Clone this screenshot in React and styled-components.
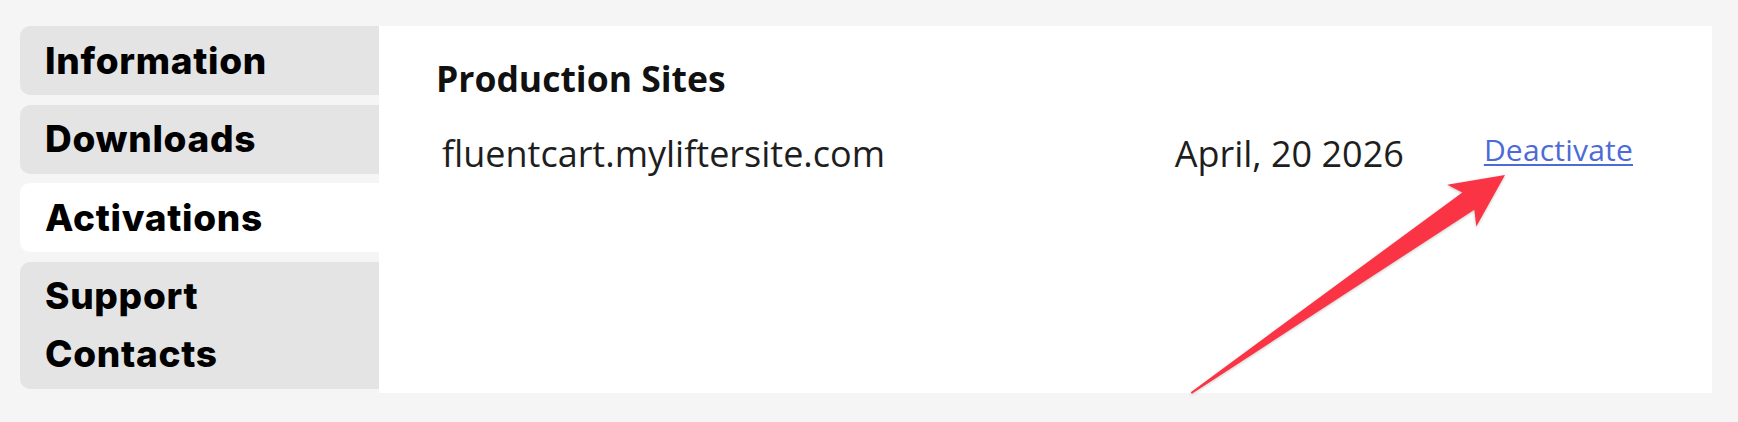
import React from 'react'
import styled, { createGlobalStyle } from 'styled-components'

const GlobalStyle = createGlobalStyle`
  html, body {
    margin: 0;
    padding: 0;
    background: #f5f5f5;
  }
  * {
    box-sizing: border-box;
  }
`

const Layout = styled.div`
  display: flex;
  min-height: 100vh;
  padding: 26px 26px 29px 20px;
`

const Sidebar = styled.nav`
  display: flex;
  flex-direction: column;
  gap: 9.5px;
  width: 359px;
  flex-shrink: 0;
`

const Tab = styled.a`
  display: block;
  padding: 5.5px 20px 5.5px 25px;
  border-radius: 10px 0 0 10px;
  background: ${props => (props.$active ? '#ffffff' : '#e4e4e4')};
  color: #000;
  font-family: Inter, 'Liberation Sans', sans-serif;
  font-weight: 800;
  font-size: 37px;
  letter-spacing: 0.7px;
  line-height: 58px;
  text-decoration: none;
  cursor: pointer;
`

const Panel = styled.section`
  position: relative;
  flex: 1;
  background: #fff;
  padding: 28px 79px 0 57px;
  font-family: 'Open Sans', 'Noto Sans', sans-serif;
`

const Heading = styled.h2`
  margin: 0 0 26.5px 0;
  font-size: 35.5px;
  font-weight: 700;
  line-height: normal;
  color: #111;
`

const SiteRow = styled.div`
  display: grid;
  grid-template-columns: 1fr auto auto;
  column-gap: 80px;
  align-items: start;
  padding-left: 6px;
`

const Cell = styled.span`
  font-size: 36px;
  line-height: normal;
  color: #1e1e1e;
`

const DeactivateLink = styled.a`
  font-size: 30px;
  letter-spacing: 0.2px;
  line-height: normal;
  color: #4c6bd6;
  text-decoration: underline;
  text-decoration-thickness: 2px;
  text-underline-offset: 3px;
  cursor: pointer;
`

const Pointer = styled.svg`
  position: absolute;
  left: 0;
  top: 0;
  width: 100%;
  height: 100%;
  pointer-events: none;
  overflow: visible;
  filter: drop-shadow(0 1px 1.5px rgba(0, 0, 0, 0.22));
`

const tabs = ['Information', 'Downloads', 'Activations', 'Support Contacts']

const sites = [
  { domain: 'fluentcart.myliftersite.com', date: 'April, 20 2026' }
]

// tapered callout arrow, tip at the origin, pointing along +x
const ArrowMark = ({ x, y, angle }) => (
  <g transform={`translate(${x} ${y}) rotate(${angle})`}>
    <polygon
      points="0,0 -53,26 -45,11 -382,1 -382,-1 -45,-10 -53,-25"
      fill="#fa3445"
    />
  </g>
)

export default function App () {
  return (
    <>
      <GlobalStyle />
      <Layout>
        <Sidebar>
          {tabs.map(label => (
            <Tab key={label} $active={label === 'Activations'}>{label}</Tab>
          ))}
        </Sidebar>
        <Panel>
          <Heading>Production Sites</Heading>
          {sites.map(site => (
            <SiteRow key={site.domain}>
              <Cell>{site.domain}</Cell>
              <Cell>{site.date}</Cell>
              <DeactivateLink>Deactivate</DeactivateLink>
            </SiteRow>
          ))}
          <Pointer>
            <ArrowMark x={1126} y={149} angle={-34.8} />
          </Pointer>
        </Panel>
      </Layout>
    </>
  )
}
